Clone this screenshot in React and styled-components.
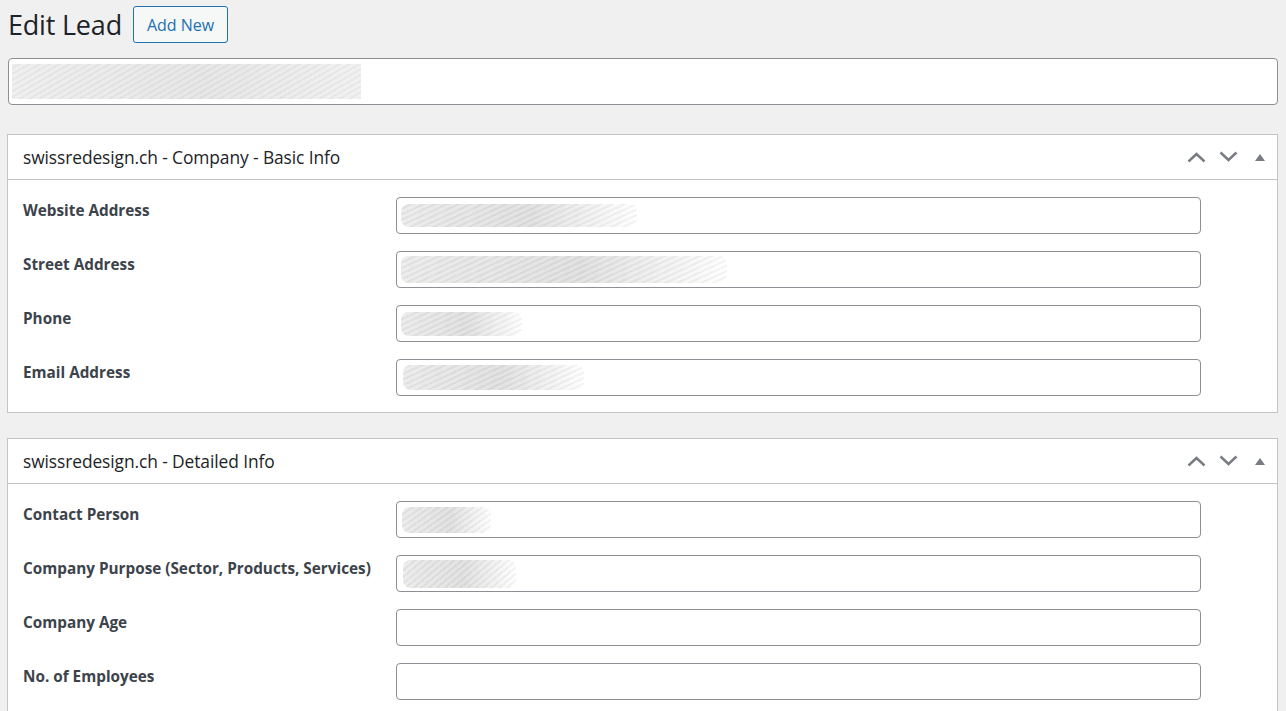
import React from "react";
import styled, { createGlobalStyle } from "styled-components";

const Global = createGlobalStyle`
  html, body { margin: 0; padding: 0; background: #f0f0f1; }
  body { font-family: "Open Sans", "Noto Sans", sans-serif; color: #1d2327; overflow: hidden; }
  * { box-sizing: border-box; }
`;

const Page = styled.div`
  padding: 6px 8px 0 7px;
`;

const HeaderRow = styled.div`
  display: flex;
  align-items: center;
  gap: 11px;
  padding-left: 1px;
`;

const Title = styled.h1`
  margin: 0;
  font-size: 27px;
  font-weight: 400;
  line-height: 36px;
  color: #1d2327;
  letter-spacing: -0.2px;
`;

const Button = styled.button`
  height: 37px;
  padding: 0 13px;
  border: 1px solid #2271b1;
  border-radius: 3px;
  background: #f6f7f7;
  color: #2271b1;
  font-family: inherit;
  font-size: 16px;
  cursor: pointer;
`;

const TitleField = styled.div`
  margin: 15px 0 0 1px;
  height: 47px;
  border: 1px solid #8c8f94;
  border-radius: 4px;
  background: #fff;
  padding: 6px 3px;
  display: flex;
  align-items: center;
`;

const Smudge = styled.div`
  width: ${(p) => p.$w}px;
  height: ${(p) => p.$h}px;
  margin-left: ${(p) => p.$ml || 0}px;
  background:
    repeating-linear-gradient(${(p) => p.$angle || -25}deg, rgba(150,150,150,0.12) 0 2px, rgba(255,255,255,0.15) 2px 5px),
    linear-gradient(to right, #e6e6e6 0%, #d8d8d8 55%, ${(p) => p.$end || "#e9e9e9"} 100%);
  opacity: ${(p) => p.$o || 0.85};
  border-radius: ${(p) => p.$r || 0}px;
`;

const Postbox = styled.section`
  margin-top: ${(p) => p.$mt}px;
  border: 1px solid #c3c4c7;
  background: #fff;
`;

const PostboxHeader = styled.div`
  height: 45px;
  border-bottom: 1px solid #c3c4c7;
  display: flex;
  align-items: center;
  justify-content: space-between;
  padding: 0 10px 0 15px;
`;

const PostboxTitle = styled.h2`
  margin: 0;
  font-size: 17.4px;
  font-weight: 400;
  color: #1d2327;
  letter-spacing: -0.1px;
`;

const Handles = styled.div`
  display: flex;
  align-items: center;
  color: #787c82;
`;

const Handle = styled.span`
  display: inline-flex;
  width: ${(p) => p.$w || 20}px;
  margin-left: ${(p) => p.$ml || 0}px;
  justify-content: center;
`;

const Body = styled.div`
  padding: 17px 15px 16px 15px;
  display: flex;
  flex-direction: column;
  gap: 17px;
`;

const Row = styled.div`
  display: grid;
  grid-template-columns: 373px 805px;
  align-items: start;
`;

const Label = styled.label`
  font-size: 15.3px;
  font-weight: 700;
  color: #3c434a;
  padding-top: 3px;
  line-height: 20px;
`;

const Input = styled.div`
  height: 37px;
  border: 1px solid #8c8f94;
  border-radius: 4px;
  background: #fff;
  display: flex;
  align-items: center;
  padding-left: 4px;
`;

const Up = () => (
  <svg width="19" height="12" viewBox="0 0 19 12" fill="none">
    <path d="M1.5 10.5 L9.5 3 L17.5 10.5" stroke="#787c82" strokeWidth="2.4" />
  </svg>
);
const Down = () => (
  <svg width="19" height="12" viewBox="0 0 19 12" fill="none">
    <path d="M1.5 1.5 L9.5 9 L17.5 1.5" stroke="#787c82" strokeWidth="2.4" />
  </svg>
);
const Tri = () => (
  <svg width="10" height="7" viewBox="0 0 10 7">
    <path d="M0 7 L5 0 L10 7 Z" fill="#787c82" />
  </svg>
);

const basic = [
  { label: "Website Address", smudge: { w: 236, h: 23 } },
  { label: "Street Address", smudge: { w: 326, h: 27 } },
  { label: "Phone", smudge: { w: 121, h: 24 } },
  { label: "Email Address", smudge: { w: 181, h: 25, ml: 2 } },
];

const detailed = [
  { label: "Contact Person", smudge: { w: 89, h: 26, ml: 1, angle: -35 } },
  { label: "Company Purpose (Sector, Products, Services)", smudge: { w: 113, h: 28, ml: 2, angle: -40 } },
  { label: "Company Age" },
  { label: "No. of Employees" },
];

const Box = ({ title, rows, mt }) => (
  <Postbox $mt={mt}>
    <PostboxHeader>
      <PostboxTitle>{title}</PostboxTitle>
      <Handles>
        <Handle><Up /></Handle>
        <Handle $ml={12}><Down /></Handle>
        <Handle $w={14} $ml={15}><Tri /></Handle>
      </Handles>
    </PostboxHeader>
    <Body>
      {rows.map((r) => (
        <Row key={r.label}>
          <Label>{r.label}</Label>
          <Input>
            {r.smudge && (
              <Smudge
                $w={r.smudge.w}
                $h={r.smudge.h}
                $ml={r.smudge.ml}
                $angle={r.smudge.angle}
                $end="#ffffff"
                $r={8}
              />
            )}
          </Input>
        </Row>
      ))}
    </Body>
  </Postbox>
);

export default function App() {
  return (
    <>
      <Global />
      <Page>
        <HeaderRow>
          <Title>Edit Lead</Title>
          <Button>Add New</Button>
        </HeaderRow>
        <TitleField>
          <Smudge $w={349} $h={35} $angle={-30} $o={0.7} />
        </TitleField>
        <Box title="swissredesign.ch - Company - Basic Info" rows={basic} mt={29} />
        <Box title="swissredesign.ch - Detailed Info" rows={detailed} mt={25} />
      </Page>
    </>
  );
}
